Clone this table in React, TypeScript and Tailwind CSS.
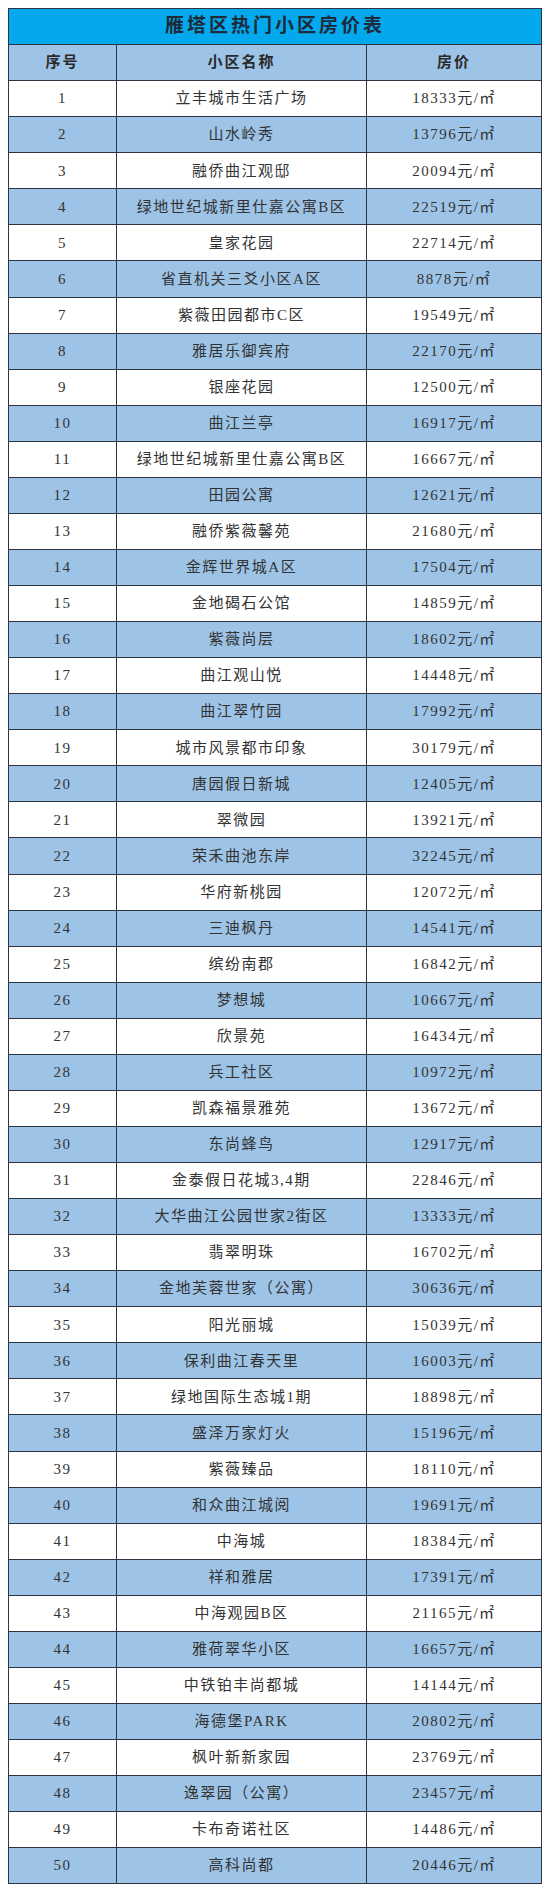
const rows: [string, string][] = [
  ["立丰城市生活广场", "18333"],
  ["山水岭秀", "13796"],
  ["融侨曲江观邸", "20094"],
  ["绿地世纪城新里仕嘉公寓B区", "22519"],
  ["皇家花园", "22714"],
  ["省直机关三爻小区A区", "8878"],
  ["紫薇田园都市C区", "19549"],
  ["雅居乐御宾府", "22170"],
  ["银座花园", "12500"],
  ["曲江兰亭", "16917"],
  ["绿地世纪城新里仕嘉公寓B区", "16667"],
  ["田园公寓", "12621"],
  ["融侨紫薇馨苑", "21680"],
  ["金辉世界城A区", "17504"],
  ["金地碣石公馆", "14859"],
  ["紫薇尚层", "18602"],
  ["曲江观山悦", "14448"],
  ["曲江翠竹园", "17992"],
  ["城市风景都市印象", "30179"],
  ["唐园假日新城", "12405"],
  ["翠微园", "13921"],
  ["荣禾曲池东岸", "32245"],
  ["华府新桃园", "12072"],
  ["三迪枫丹", "14541"],
  ["缤纷南郡", "16842"],
  ["梦想城", "10667"],
  ["欣景苑", "16434"],
  ["兵工社区", "10972"],
  ["凯森福景雅苑", "13672"],
  ["东尚蜂鸟", "12917"],
  ["金泰假日花城3,4期", "22846"],
  ["大华曲江公园世家2街区", "13333"],
  ["翡翠明珠", "16702"],
  ["金地芙蓉世家（公寓）", "30636"],
  ["阳光丽城", "15039"],
  ["保利曲江春天里", "16003"],
  ["绿地国际生态城1期", "18898"],
  ["盛泽万家灯火", "15196"],
  ["紫薇臻品", "18110"],
  ["和众曲江城阅", "19691"],
  ["中海城", "18384"],
  ["祥和雅居", "17391"],
  ["中海观园B区", "21165"],
  ["雅荷翠华小区", "16657"],
  ["中铁铂丰尚都城", "14144"],
  ["海德堡PARK", "20802"],
  ["枫叶新新家园", "23769"],
  ["逸翠园（公寓）", "23457"],
  ["卡布奇诺社区", "14486"],
  ["高科尚都", "20446"],
];

const font = { fontFamily: '"Liberation Serif", "Noto Sans CJK SC", serif' };

export default function App() {
  return (
    <div className="min-h-[1893px] w-[550px] bg-white px-2 pt-2" style={font}>
      <div className="border-x border-t border-[#2e3440] text-[#333]">
        <div className="flex h-[36.07px] items-center justify-center border-b border-[#2e3440] bg-[#03a9ec] text-[19px] font-bold tracking-[3px] text-[#1d2a3a]">
          雁塔区热门小区房价表
        </div>
        <div className="grid h-[36.07px] grid-cols-[108px_250px_1fr] border-b border-[#2e3440] bg-[#9dc3e6] text-[15px] font-bold tracking-[2px] text-[#2a2a2a]">
          <div className="flex items-center justify-center border-r border-[#2e3440]">序号</div>
          <div className="flex items-center justify-center border-r border-[#2e3440]">小区名称</div>
          <div className="flex items-center justify-center">房价</div>
        </div>
        {rows.map(([name, price], i) => (
          <div
            key={i}
            className={`grid h-[36.07px] grid-cols-[108px_250px_1fr] border-b border-[#2e3440] text-[15px] tracking-[1.5px] ${
              i % 2 === 1 ? "bg-[#9dc3e6]" : "bg-white"
            }`}
          >
            <div className="flex items-center justify-center border-r border-[#2e3440]">{i + 1}</div>
            <div className="flex items-center justify-center border-r border-[#2e3440]">{name}</div>
            <div className="flex items-center justify-center">
              {price}元/㎡
            </div>
          </div>
        ))}
      </div>
    </div>
  );
}
